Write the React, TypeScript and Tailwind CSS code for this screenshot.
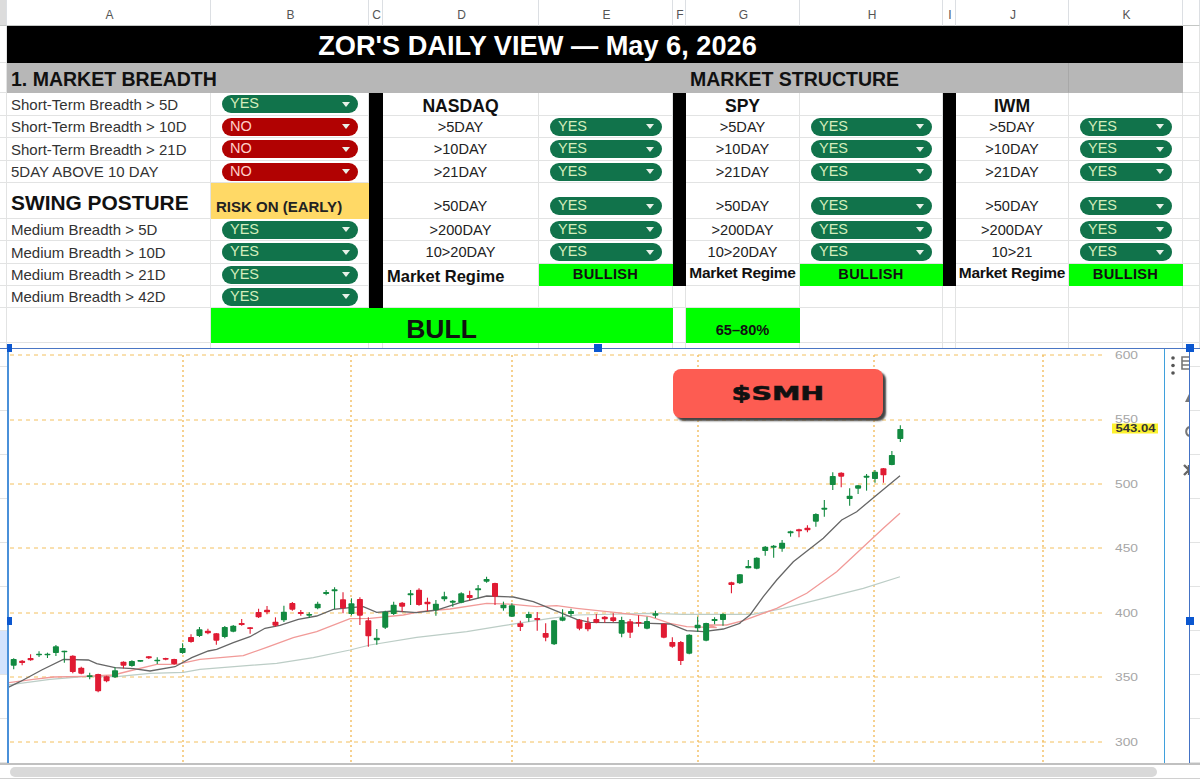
import React from 'react';

type Candle = [string, number, number, number, number];

const seg7: Candle[] = [
  ['g', 295, 328, 297, 317], ['r', 300, 316, 302, 309], ['r', 283, 302, 294, 301], ['g', 274, 291, 281, 285],
  ['g', 278, 294, 281, 286], ['g', 255, 288, 259, 279], ['g', 272, 308, 272, 277], ['r', 286, 340, 287, 336],
  ['r', 320, 343, 323, 341], ['g', 338, 358, 346, 351], ['r', 341, 397, 342, 394], ['r', 347, 367, 349, 364],
  ['g', 322, 354, 331, 352], ['r', 304, 325, 305, 317], ['g', 301, 320, 303, 318], ['g', 300, 305, 300, 305],
  ['r', 288, 297, 289, 295], ['g', 292, 312, 299, 304], ['r', 293, 301, 294, 299], ['r', 296, 314, 297, 312],
  ['g', 250, 281, 264, 279], ['r', 223, 248, 231, 246], ['g', 201, 231, 208, 228], ['r', 206, 223, 212, 220],
  ['r', 219, 254, 220, 242], ['g', 198, 235, 201, 231], ['g', 195, 217, 197, 215], ['r', 177, 197, 189, 195],
  ['r', 201, 221, 202, 207], ['r', 146, 174, 156, 172], ['r', 138, 163, 149, 157], ['r', 172, 200, 185, 197],
  ['g', 137, 186, 155, 181], ['r', 126, 152, 129, 149], ['r', 150, 167, 156, 162], ['g', 157, 174, 162, 167],
  ['g', 125, 148, 131, 145], ['g', 90, 106, 96, 102], ['g', 82, 147, 88, 94], ['r', 97, 160, 118, 145],
  ['g', 115, 166, 130, 162], ['r', 112, 195, 117, 167], ['r', 172, 260, 181, 229], ['g', 207, 254, 233, 241],
  ['g', 152, 207, 155, 203], ['g', 125, 165, 134, 162], ['r', 126, 155, 128, 140], ['g', 90, 135, 100, 106],
  ['r', 85, 137, 89, 135], ['r', 113, 153, 125, 133], ['g', 120, 167, 131, 150], ['g', 95, 124, 109, 118],
  ['g', 120, 140, 122, 128], ['g', 97, 130, 100, 128], ['r', 92, 122, 105, 114], ['g', 75, 115, 85, 91],
  ['g', 50, 68, 57, 65], ['r', 68, 135, 69, 110], ['g', 125, 152, 134, 145], ['g', 130, 171, 136, 170],
  ['r', 182, 213, 190, 201], ['g', 155, 185, 162, 174], ['r', 156, 212, 174, 180], ['r', 190, 244, 219, 233],
  ['g', 180, 255, 181, 253], ['g', 148, 184, 172, 182], ['g', 146, 169, 153, 162], ['r', 177, 211, 179, 206],
  ['r', 172, 214, 188, 208], ['r', 162, 190, 177, 188], ['r', 168, 188, 170, 178], ['r', 160, 186, 172, 183],
  ['g', 170, 232, 180, 221], ['r', 177, 234, 184, 218], ['r', 166, 200, 186, 190], ['g', 170, 208, 183, 206],
  ['g', 152, 174, 160, 167], ['r', 190, 235, 191, 233], ['r', 232, 263, 246, 260], ['r', 243, 315, 246, 303],
  ['g', 223, 283, 224, 281], ['g', 170, 215, 194, 205], ['g', 188, 244, 189, 242], ['g', 172, 193, 177, 183],
  ['g', 160, 197, 162, 180],
];

// these were read from the tighter crop, y = 350 + v / 3
const seg9: Candle[] = [
  ['r', 695, 730, 697, 705], ['g', 672, 702, 673, 700], ['g', 630, 655, 648, 655], ['g', 622, 658, 623, 656],
  ['g', 588, 617, 590, 603], ['g', 585, 623, 587, 593], ['g', 570, 605, 578, 596], ['g', 542, 560, 544, 550],
  ['r', 536, 562, 538, 544], ['r', 526, 547, 533, 541], ['g', 490, 530, 492, 515], ['g', 450, 500, 473, 479],
  ['g', 367, 420, 378, 405], ['r', 367, 412, 368, 380], ['g', 415, 467, 437, 447], ['g', 405, 432, 406, 416],
  ['g', 372, 422, 377, 383], ['g', 360, 398, 365, 387], ['r', 354, 398, 355, 376], ['g', 303, 346, 315, 345],
  ['g', 226, 276, 237, 267],
];

const candles: Candle[] = [
  ...seg7.map(([c, a, b, d, e]): Candle => [c, 560 + a / 3, 560 + b / 3, 560 + d / 3, 560 + e / 3]),
  ...seg9.map(([c, a, b, d, e]): Candle => [c, 350 + a / 3, 350 + b / 3, 350 + d / 3, 350 + e / 3]),
];

const pts = (ox: number, oy: number, list: number[][]) => list.map(([x, y]) => [ox + x / 3, oy + y / 3]);
const toLine = (list: number[][]) => list.map(([x, y]) => `${x.toFixed(1)},${y.toFixed(1)}`).join(' ');

const blackMa = toLine([
  ...pts(0, 560, [[25, 382], [60, 365], [125, 330], [190, 298], [265, 300], [290, 311], [345, 323], [400, 326], [450, 333], [525, 320], [575, 293], [625, 273], [650, 268], [700, 248], [750, 230], [795, 205], [840, 196], [895, 178], [950, 168], [1000, 148], [1050, 143]]),
  ...pts(350, 560, [[40, 140], [80, 157], [130, 153], [200, 158], [260, 150], [330, 128], [410, 108], [490, 111], [550, 125], [600, 145], [680, 178], [720, 187], [800, 188], [900, 190], [960, 192], [1010, 212], [1060, 215], [1120, 207], [1170, 190]]),
  ...pts(650, 350, [[270, 818], [300, 795], [340, 740], [380, 690], [430, 635], [520, 565], [575, 510], [620, 485], [680, 435], [750, 377]]),
]);

const redMa = toLine([
  ...pts(0, 560, [[25, 368], [100, 358], [160, 351], [250, 349], [340, 345], [400, 330], [470, 313], [530, 313], [600, 298], [730, 287], [800, 262], [880, 233], [950, 215], [1050, 176]]),
  ...pts(350, 560, [[60, 175], [160, 165], [210, 155], [300, 147], [410, 130], [490, 133], [560, 140], [620, 137], [680, 145], [800, 158], [900, 170], [960, 190], [1010, 200], [1100, 203]]),
  ...pts(650, 350, [[170, 825], [230, 825], [280, 812], [380, 775], [470, 730], [560, 665], [630, 600], [700, 535], [750, 490]]),
]);

const grayMa = toLine([
  ...pts(0, 560, [[25, 375], [150, 358], [250, 350], [350, 350], [450, 340], [550, 337], [600, 328], [830, 310], [940, 293], [1050, 270]]),
  ...pts(350, 560, [[60, 255], [200, 232], [350, 215], [460, 197], [600, 175], [680, 165], [900, 160]]),
  ...pts(650, 350, [[0, 790], [100, 793], [310, 793], [400, 775], [520, 745], [640, 715], [750, 680]]),
]);

const gridY = [355, 420, 484, 548, 613, 677, 742];
const gridX = [183, 351, 512, 698, 874, 1043];
const axisLabels = ['600', '550', '500', '450', '400', '350', '300'];

function Cell({ className = '', children }: { className?: string; children?: React.ReactNode }) {
  return <div className={`flex min-w-0 items-center whitespace-nowrap border-r border-b border-[#e2e3e3] ${className}`}>{children}</div>;
}

function Chip({ value }: { value: 'YES' | 'NO' }) {
  const isYes = value === 'YES';
  return (
    <div className={`ml-[11px] mr-[10px] flex h-[18px] flex-1 items-center justify-between rounded-full pl-[8px] pr-[8px] text-[14.5px] ${isYes ? 'bg-[#11734b] text-[#d4edbc]' : 'bg-[#b10202] text-[#ffcfc9]'}`}>
      <span>{value}</span>
      <span className="h-0 w-0 border-x-[4.5px] border-t-[5px] border-x-transparent border-t-[#e8f0e8]" />
    </div>
  );
}

function ChipCell({ value, className = '' }: { value: 'YES' | 'NO'; className?: string }) {
  return <Cell className={className}><Chip value={value} /></Cell>;
}

function Label({ children, className = '' }: { children?: React.ReactNode; className?: string }) {
  return <Cell className={`pt-[2px] pl-[4px] text-[15px] text-[#333] ${className}`}>{children}</Cell>;
}

function Mid({ children, className = '' }: { children?: React.ReactNode; className?: string }) {
  return <Cell className={`justify-center pt-[2px] text-[14.6px] text-[#222] ${className}`}>{children}</Cell>;
}

function Regime({ children = 'Market Regime', className = '' }: { children?: React.ReactNode; className?: string }) {
  return <Cell className={`text-[15.5px] font-bold text-[#111] ${className}`}>{children}</Cell>;
}

function Bullish() {
  return <Cell className="items-start justify-center border-transparent bg-[#00ff00] text-[14.6px] font-bold tracking-[0.3px] text-[#111]">BULLISH</Cell>;
}

function Ticker({ children }: { children: React.ReactNode }) {
  return <Cell className="items-end justify-center text-[17.6px] leading-[17px] font-bold text-[#111]">{children}</Cell>;
}

function Sheet() {
  const heads = ['', 'A', 'B', 'C', 'D', 'E', 'F', 'G', 'H', 'I', 'J', 'K', ''];
  return (
    <div className="grid grid-cols-[7px_204px_158px_14px_156px_134px_13px_114px_143px_13px_113px_114px_17px] grid-rows-[26px_37px_30px_23px_22px_23px_22px_36px_22px_23px_22px_22px_35px_5px]">
      {/* column letters */}
      {heads.map((name, i) => (
        <div key={i} className={`flex items-center justify-center border-r border-b border-r-[#dcdfe3] border-b-[#c4c7c5] pt-[4px] pl-[2px] text-[12px] text-[#555] ${i === 0 ? 'bg-[#dcdcdc]' : ''}`}>{name}</div>
      ))}

      {/* title */}
      <Cell />
      <Cell className="col-span-10 justify-center border-transparent bg-black pt-[4px] text-[27.2px] leading-none font-bold text-white">ZOR'S DAILY VIEW — May 6, 2026</Cell>
      <Cell className="border-transparent bg-black" />
      <Cell />

      {/* section bar */}
      <Cell />
      <Cell className="col-span-6 border-transparent bg-[#b7b7b7] pt-[5px] pl-[4px] text-[19.5px] leading-none font-bold text-[#111]">1. MARKET BREADTH</Cell>
      <Cell className="col-span-4 border-r-[#a8a8a8] border-b-transparent bg-[#b7b7b7] pt-[5px] pl-[4px] text-[19.5px] leading-none font-bold text-[#111]">MARKET STRUCTURE</Cell>
      <Cell className="border-transparent bg-[#b7b7b7]" />
      <Cell />

      {/* row 3 */}
      <Cell />
      <Label>Short-Term Breadth &gt; 5D</Label>
      <ChipCell value="YES" />
      <div className="row-span-9 bg-black" />
      <Ticker>NASDAQ</Ticker>
      <Cell />
      <div className="row-span-8 bg-black" />
      <Ticker>SPY</Ticker>
      <Cell />
      <div className="row-span-8 bg-black" />
      <Ticker>IWM</Ticker>
      <Cell />
      <Cell />

      {/* row 4 */}
      <Cell />
      <Label>Short-Term Breadth &gt; 10D</Label>
      <ChipCell value="NO" />
      <Mid>&gt;5DAY</Mid><ChipCell value="YES" />
      <Mid>&gt;5DAY</Mid><ChipCell value="YES" />
      <Mid>&gt;5DAY</Mid><ChipCell value="YES" />
      <Cell />

      {/* row 5 */}
      <Cell />
      <Label>Short-Term Breadth &gt; 21D</Label>
      <ChipCell value="NO" />
      <Mid>&gt;10DAY</Mid><ChipCell value="YES" />
      <Mid>&gt;10DAY</Mid><ChipCell value="YES" />
      <Mid>&gt;10DAY</Mid><ChipCell value="YES" />
      <Cell />

      {/* row 6 */}
      <Cell />
      <Label>5DAY ABOVE 10 DAY</Label>
      <ChipCell value="NO" />
      <Mid>&gt;21DAY</Mid><ChipCell value="YES" />
      <Mid>&gt;21DAY</Mid><ChipCell value="YES" />
      <Mid>&gt;21DAY</Mid><ChipCell value="YES" />
      <Cell />

      {/* swing posture, taller row */}
      <Cell />
      <Cell className="pt-[6px] pl-[4px] text-[20.9px] leading-none font-bold text-[#111]">SWING POSTURE</Cell>
      <Cell className="items-end border-transparent bg-[#ffd966] pl-[5px] text-[15px] font-bold text-[#222]">RISK ON (EARLY)</Cell>
      <Mid className="items-end">&gt;50DAY</Mid><ChipCell value="YES" className="items-end pb-[3px]" />
      <Mid className="items-end">&gt;50DAY</Mid><ChipCell value="YES" className="items-end pb-[3px]" />
      <Mid className="items-end">&gt;50DAY</Mid><ChipCell value="YES" className="items-end pb-[3px]" />
      <Cell />

      {/* row 8 */}
      <Cell />
      <Label>Medium Breadth &gt; 5D</Label>
      <ChipCell value="YES" />
      <Mid>&gt;200DAY</Mid><ChipCell value="YES" />
      <Mid>&gt;200DAY</Mid><ChipCell value="YES" />
      <Mid>&gt;200DAY</Mid><ChipCell value="YES" />
      <Cell />

      {/* row 9 */}
      <Cell />
      <Label>Medium Breadth &gt; 10D</Label>
      <ChipCell value="YES" />
      <Mid>10&gt;20DAY</Mid><ChipCell value="YES" />
      <Mid>10&gt;20DAY</Mid><ChipCell value="YES" />
      <Mid>10&gt;21</Mid><ChipCell value="YES" />
      <Cell />

      {/* market regime */}
      <Cell />
      <Label>Medium Breadth &gt; 21D</Label>
      <ChipCell value="YES" />
      <Regime className="items-end pl-[4px] text-[16.5px] leading-[18px]">Market Regime</Regime><Bullish />
      <Regime className="justify-center pb-[3px] tracking-[-0.3px]">Market Regime</Regime><Bullish />
      <Regime className="justify-center pb-[3px] tracking-[-0.3px]">Market Regime</Regime><Bullish />
      <Cell />

      {/* row 11 */}
      <Cell />
      <Label>Medium Breadth &gt; 42D</Label>
      <ChipCell value="YES" />
      <Cell /><Cell /><Cell /><Cell /><Cell /><Cell /><Cell /><Cell /><Cell />

      {/* bull row */}
      <Cell />
      <Cell />
      <Cell className="col-span-4 justify-center border-transparent bg-[#00ff00] pt-[8px] text-[26.5px] leading-none font-bold text-[#111]">BULL</Cell>
      <Cell />
      <Cell className="items-end justify-center border-transparent bg-[#00ff00] text-[14.6px] font-bold text-[#111]">65–80%</Cell>
      <Cell /><Cell /><Cell /><Cell /><Cell />

      {/* sliver above the drawing */}
      {Array.from({ length: 13 }).map((_, i) => (
        <div key={i} className="border-r border-[#e2e3e3]" />
      ))}
    </div>
  );
}

function ChartDrawing() {
  return (
    <svg viewBox="9 349 1155 414" className="block h-[414px] w-[1155px] shrink-0">
      {gridY.map((y) => (
        <line key={y} x1="10" x2="1105" y1={y} y2={y} stroke="#f3c05f" strokeWidth="1" strokeDasharray="4 4" />
      ))}
      {gridX.map((x) => (
        <line key={x} x1={x} x2={x} y1="355" y2="763" stroke="#f2bd5e" strokeWidth="1.4" strokeDasharray="2 3" />
      ))}
      <polyline points={grayMa} fill="none" stroke="#bccdc6" strokeWidth="1.2" />
      <polyline points={redMa} fill="none" stroke="#f19a98" strokeWidth="1.3" />
      <polyline points={blackMa} fill="none" stroke="#666" strokeWidth="1.3" />
      {candles.map(([c, wickTop, wickBottom, top, bottom], i) => {
        const x = 13.7 + 8.444 * i;
        const color = c === 'g' ? '#128a40' : '#e01b33';
        return (
          <g key={i}>
            <line x1={x} x2={x} y1={wickTop} y2={wickBottom} stroke={color} strokeWidth="1.1" />
            <rect x={x - 3} y={top} width="6" height={Math.max(bottom - top, 1.6)} rx="0.8" fill={color} />
          </g>
        );
      })}
      {axisLabels.map((label, i) => (
        <text key={label} x="1115" y={i === 1 ? 423 : gridY[i] + 3.5} textLength="23" lengthAdjust="spacingAndGlyphs" fontSize="10" fill="#a6a6a6" fontFamily="'Liberation Sans', sans-serif">{label}</text>
      ))}
      <rect x="1112" y="423.5" width="46" height="10" fill="#fdf22f" />
      <text x="1115.5" y="432" textLength="40" lengthAdjust="spacingAndGlyphs" fontSize="10" fill="#333" fontWeight="bold" fontFamily="'Liberation Sans', sans-serif">543.04</text>
    </svg>
  );
}

function ToolStrip() {
  return (
    <svg viewBox="1165 349 24 414" className="block h-[414px] w-[24px] shrink-0">
      <circle cx="1173" cy="358" r="1.8" fill="#555" />
      <circle cx="1173" cy="365.5" r="1.8" fill="#555" />
      <circle cx="1173" cy="373" r="1.8" fill="#555" />
      <path d="M1189 357h-7v12h7M1182 361h7M1182 365h7" fill="none" stroke="#777" strokeWidth="1.6" />
      <path d="M1189 394l-4 8h4z" fill="#777" />
      <path d="M1189 427a5 5 0 0 0 0 9" fill="none" stroke="#777" strokeWidth="2" />
      <path d="M1184 465l5 5-5 5M1189 465v10" fill="none" stroke="#666" strokeWidth="2.4" />
    </svg>
  );
}

const sideRows = [0, 1, 2, 3, 4, 5, 6, 7, 8];

export default function App() {
  return (
    <div className="h-[780px] w-[1200px] overflow-hidden bg-white font-['Liberation_Sans',Arial,sans-serif]">
      <Sheet />

      <div className="relative">
        <div className="flex h-[415px] border-t border-[#4a76c4]">
          {/* row numbers behind the chart */}
          <div className="flex w-[7px] shrink-0 flex-col">
            <div className="h-[18px] border-b border-[#e2e3e3]" />
            {sideRows.map((i) => (
              <div key={i} className={`h-[45px] border-b border-[#e2e3e3] ${i === 6 ? 'bg-[#d3e3fd]' : ''}`} />
            ))}
          </div>
          <div className="flex min-w-0 border-l-2 border-[#4a90d9]">
            <ChartDrawing />
            <div className="border-l border-[#3fa0dc]">
              <ToolStrip />
            </div>
          </div>
          <div className="flex flex-1 flex-col border-l border-[#4472c4]">
            <div className="h-[18px] border-b border-[#e2e3e3]" />
            {sideRows.map((i) => (
              <div key={i} className="h-[45px] border-b border-[#e2e3e3]" />
            ))}
          </div>
        </div>

        {/* scroller */}
        <div className="flex h-[16px] items-center border-t-2 border-b border-t-[#c0c0c0] border-b-[#d0d0d0] bg-white pl-[10px]">
          <div className="h-[10px] w-[1147px] rounded-full bg-[#d9d9d9]" />
        </div>

        {/* ticker tag on the chart */}
        <div className="absolute top-[21px] left-[673px] flex h-[49px] w-[210px] items-center justify-center rounded-[8px] bg-[#fd5c52] shadow-[3px_3px_2px_#444]">
          <span className="scale-x-[1.5] font-['DejaVu_Sans',sans-serif] text-[19px] font-bold text-[#111] [-webkit-text-stroke:0.6px_#111]">$SMH</span>
        </div>

        {/* selection handles */}
        <div className="absolute top-[-4px] left-[7px] h-[8px] w-[5px] bg-[#0b57d0]" />
        <div className="absolute top-[-4px] left-[594px] h-[8px] w-[8px] bg-[#0b57d0]" />
        <div className="absolute top-[-4px] left-[1186px] h-[8px] w-[8px] bg-[#0b57d0]" />
        <div className="absolute top-[269px] left-[7px] h-[8px] w-[5px] bg-[#0b57d0]" />
        <div className="absolute top-[269px] left-[1186px] h-[8px] w-[8px] bg-[#0b57d0]" />
      </div>
    </div>
  );
}
